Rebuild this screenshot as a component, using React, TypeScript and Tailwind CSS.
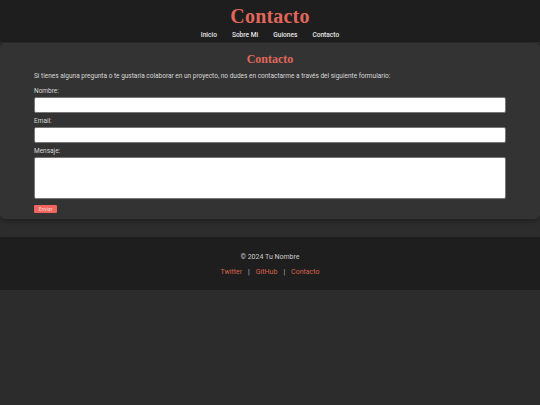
import React from "react";

const serif = { fontFamily: '"Liberation Serif", "DejaVu Serif", serif' };

export default function App() {
  return (
    <div
      className="min-h-[405px] bg-[#2c2c2c] text-[#d8d8d8]"
      style={{ fontFamily: 'Roboto, "Liberation Sans", sans-serif' }}
    >
      <header className="bg-[#1e1e1e] h-[42px] flex flex-col items-center">
        <h1
          style={serif}
          className="mt-[6px] text-[20px] leading-[21px] font-bold tracking-[0.2px] text-[#e0675a]"
        >
          Contacto
        </h1>
        <nav className="mt-[3px] flex gap-[15px] text-[6.6px] leading-[10px] font-medium">
          <a className="text-[#e6e6e6]">Inicio</a>
          <a className="text-[#e6e6e6]">Sobre Mi</a>
          <a className="text-[#e6e6e6]">Guiones</a>
          <a className="text-[#e6e6e6]">Contacto</a>
        </nav>
      </header>

      <main className="mt-[1px] bg-[#333333] rounded-[5px] shadow-[0_2px_4px_rgba(0,0,0,0.3)] px-[34px] pt-[9px] pb-[6px] h-[176px]">
        <h2
          style={serif}
          className="text-center text-[12px] leading-[14px] font-bold text-[#e0675a]"
        >
          Contacto
        </h2>
        <p className="mt-[6px] text-[6.5px] leading-[9px]">
          Si tienes alguna pregunta o te gustaría colaborar en un proyecto, no
          dudes en contactarme a través del siguiente formulario:
        </p>
        <form className="flex flex-col">
          <label className="mt-[6px] text-[6.5px] leading-[9px]">Nombre:</label>
          <input className="mt-[1px] h-[16px] w-[472px] bg-white border border-[#777] rounded-[2px]" />
          <label className="mt-[4px] text-[6.5px] leading-[9px]">Email:</label>
          <input className="mt-[1px] h-[16px] w-[472px] bg-white border border-[#777] rounded-[2px]" />
          <label className="mt-[4px] text-[6.5px] leading-[9px]">Mensaje:</label>
          <textarea className="mt-[1px] h-[42px] w-[472px] bg-white border border-[#777] rounded-[2px] resize-none" />
          <button
            type="button"
            className="mt-[6px] self-start w-[23px] h-[8px] bg-[#f0665e] text-[#ffd6d2] text-[5px] leading-[8px] rounded-[1px]"
          >
            Enviar
          </button>
        </form>
      </main>

      <footer className="mt-[18px] bg-[#1e1e1e] h-[53px] flex flex-col items-center text-[7px] leading-[10px]">
        <p className="mt-[15px] text-[#cccccc]">© 2024 Tu Nombre</p>
        <p className="mt-[5px] text-[#c0c0c0]">
          <a className="text-[#d9604f]">Twitter</a>
          <span className="mx-[6px]">|</span>
          <a className="text-[#d9604f]">GitHub</a>
          <span className="mx-[6px]">|</span>
          <a className="text-[#d9604f]">Contacto</a>
        </p>
      </footer>
    </div>
  );
}
